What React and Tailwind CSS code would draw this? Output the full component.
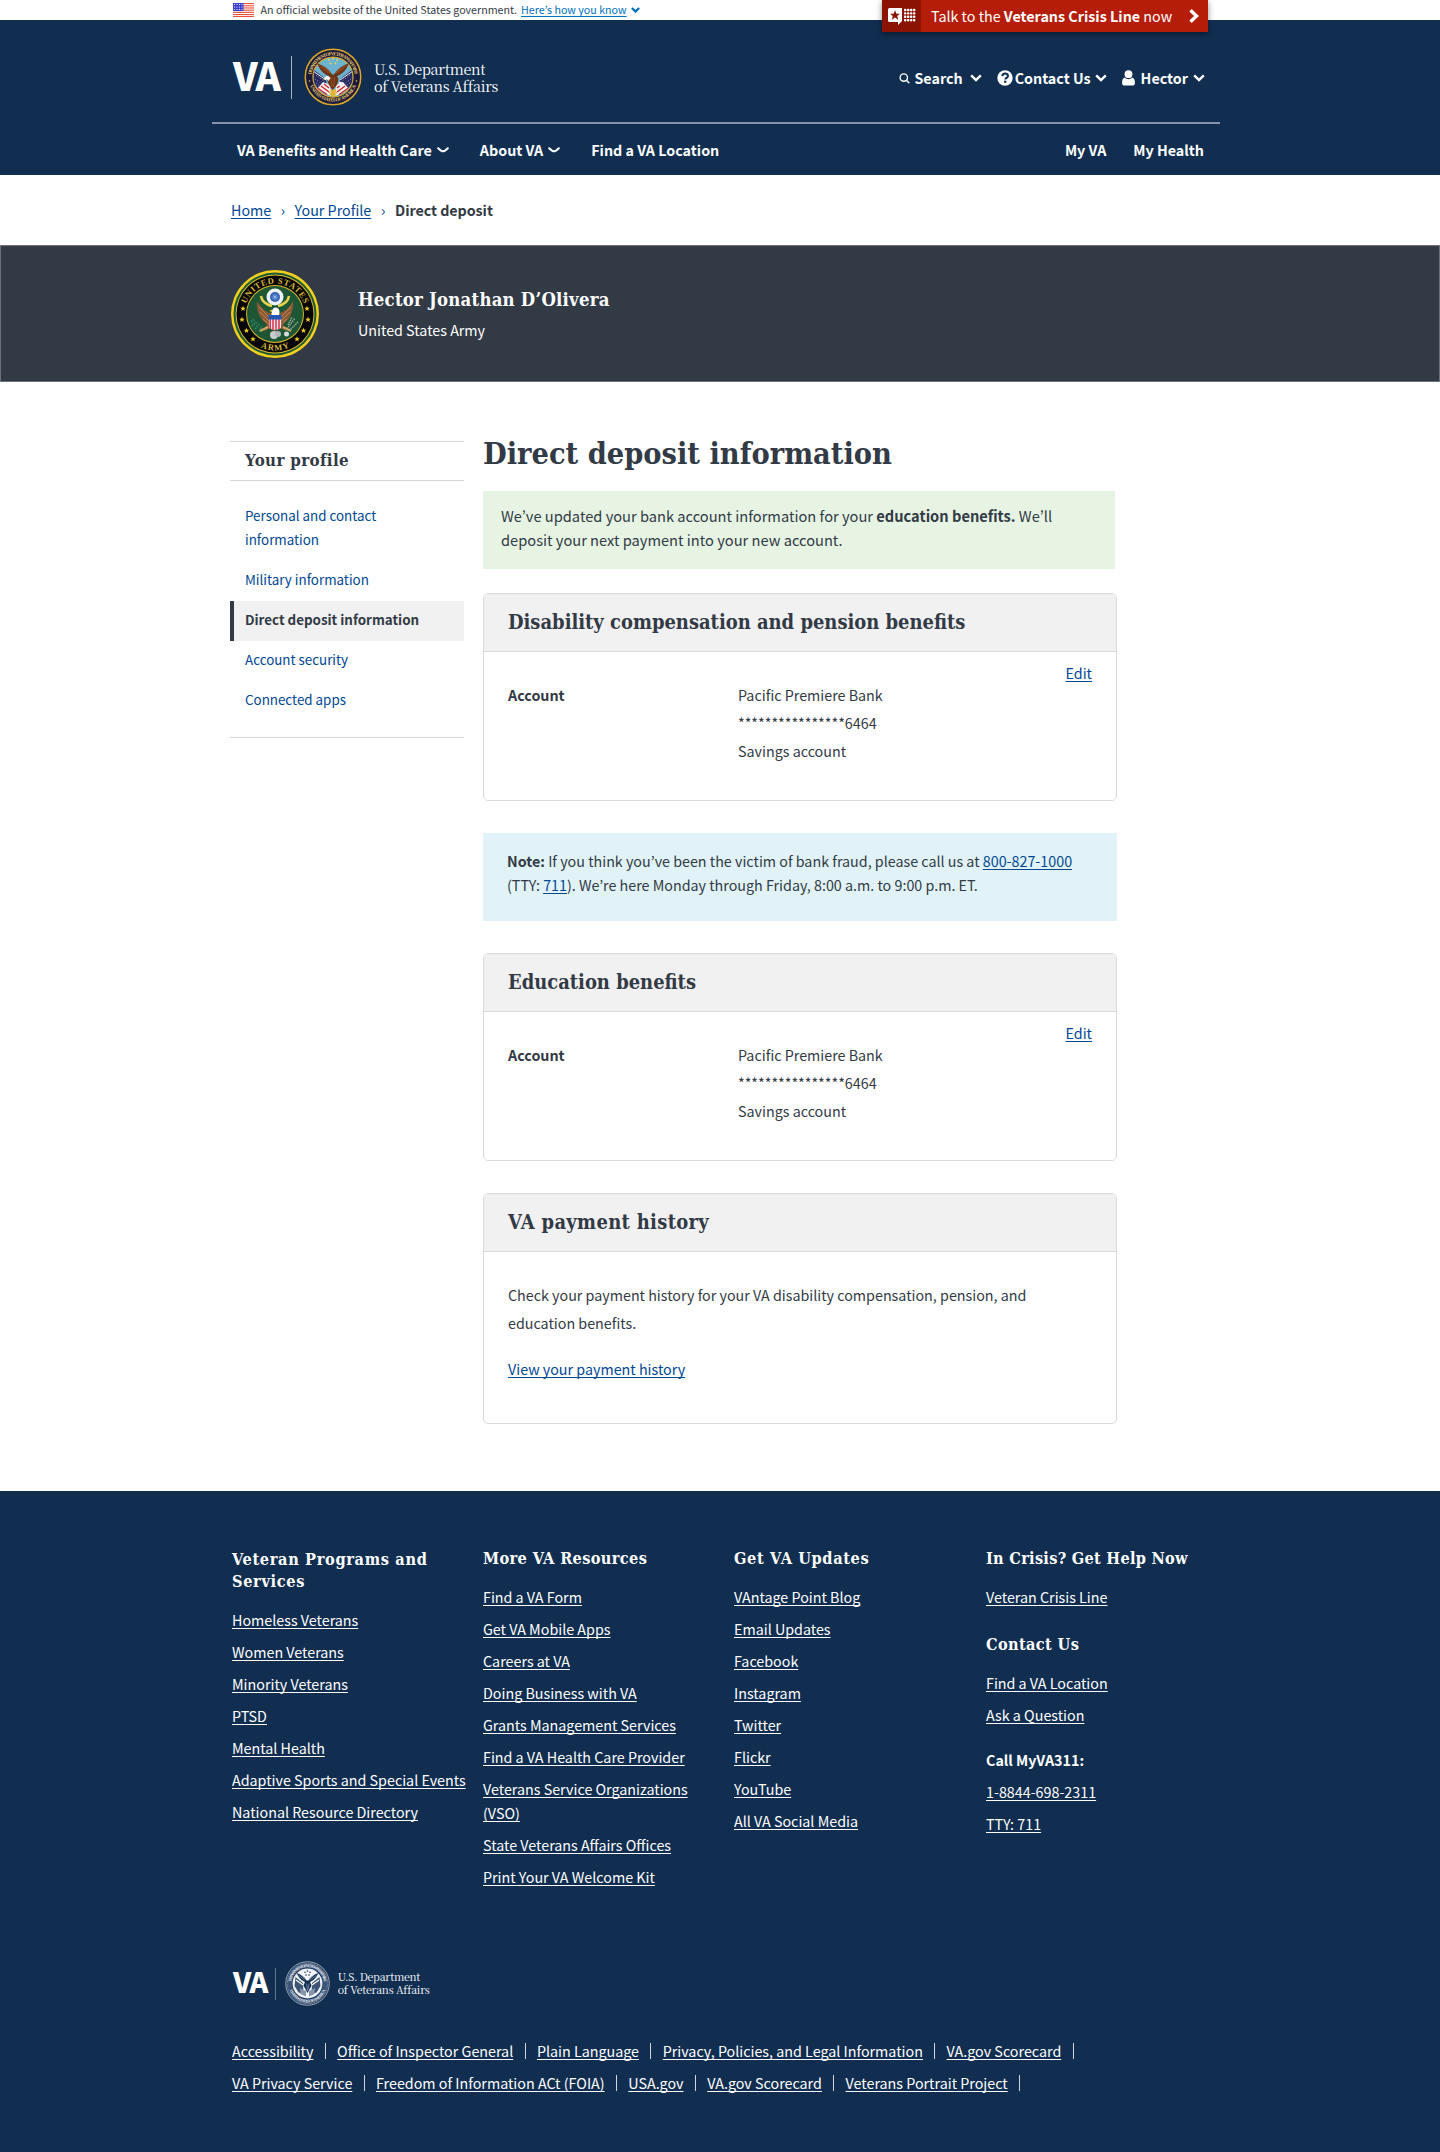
import React from "react";

const sans = "font-['Noto_Sans_CJK_KR','Noto_Sans_CJK_SC','Open_Sans',sans-serif]";
const slab = "font-['DejaVu_Serif_Condensed','DejaVu_Serif',serif] font-bold [font-stretch:condensed]";
const serif = "font-['Noto_Serif_CJK_KR','Liberation_Serif',serif]";

const linkLine = "underline decoration-1 underline-offset-2 [text-decoration-skip-ink:none]";

function Chevron({ className, weight = 2.4 }) {
  return (
    <svg viewBox="0 0 12 8" className={className} fill="none" stroke="currentColor" strokeWidth={weight}>
      <path d="M1.2 1.3 L6 6.1 L10.8 1.3" />
    </svg>
  );
}

function NavChevron() {
  return (
    <svg viewBox="0 0 12 6" className="mt-px ml-[5px] h-[6px] w-[12px]" fill="none" stroke="currentColor" strokeWidth="2" strokeLinecap="round">
      <path d="M1.200 1.200 C3 3 4.500 4.300 6 4.300 C7.500 4.300 9 3 10.800 1.200" />
    </svg>
  );
}

function Flag() {
  return (
    <svg viewBox="0 0 21 14" className="h-[14px] w-[21px] shrink-0">
      <rect width="21" height="14" fill="#fff" />
      {[0, 2.2, 4.4, 6.6, 8.8, 11, 13].map((y) => (
        <rect key={y} y={y} width="21" height="1.1" fill="#f0503c" />
      ))}
      <rect width="10.5" height="8" fill="#3c3fd0" />
      {[1.5, 4, 6.5].map((y) =>
        [1.5, 4, 6.5, 9].map((x) => <circle key={`${x}-${y}`} cx={x} cy={y} r="0.6" fill="#fff" />)
      )}
    </svg>
  );
}

function VaSeal({ className }) {
  return (
    <svg viewBox="0 0 116 116" className={className}>
      <defs>
        <path id="vaTop" d="M14.500 58 A43.500 43.500 0 0 1 101.500 58" />
        <path id="vaBottom" d="M9 58 A49 49 0 0 0 107 58" />
        <clipPath id="vaInner">
          <circle cx="58" cy="58" r="39" />
        </clipPath>
      </defs>
      <circle cx="58" cy="58" r="57.500" fill="#1b1a3c" />
      <circle cx="58" cy="58" r="55.500" fill="none" stroke="#d9a92c" strokeWidth="3" />
      <circle cx="58" cy="58" r="40" fill="#6ab4d2" stroke="#d9a92c" strokeWidth="2.500" />
      <g fontFamily="Liberation Serif" fontWeight="700" fontSize="9.500" fill="#e6c86a">
        <text textAnchor="middle">
          <textPath href="#vaTop" startOffset="50%" textLength="126">DEPARTMENT OF VETERANS AFFAIRS</textPath>
        </text>
        <text textAnchor="middle">
          <textPath href="#vaBottom" startOffset="50%" textLength="118">UNITED STATES OF AMERICA</textPath>
        </text>
      </g>
      <circle cx="11" cy="66" r="1.500" fill="#e6c86a" />
      <circle cx="105" cy="66" r="1.500" fill="#e6c86a" />
      <g clipPath="url(#vaInner)">
        <path d="M20 44 L44 62 L46 90 L30 84 L18 68Z" fill="#2a2a63" />
        <path d="M96 44 L72 62 L70 90 L86 84 L98 68Z" fill="#2a2a63" />
        <g stroke="#d8dcea" strokeWidth="1.600" strokeDasharray="1.600 4">
          <path d="M24 54 L42 68 M22 62 L42 76 M24 70 L40 82" />
          <path d="M92 54 L74 68 M94 62 L74 76 M92 70 L76 82" />
        </g>
        <path d="M38 68 L52 74 L54 96 L40 90 L26 82Z" fill="#f4f2f2" />
        <path d="M78 68 L64 74 L62 96 L76 90 L90 82Z" fill="#f4f2f2" />
        <g stroke="#c62a35" strokeWidth="3" fill="none">
          <path d="M40 72 L50 80 M34 76 L50 88 M27 80 L46 93" />
          <path d="M76 72 L66 80 M82 76 L66 88 M89 80 L70 93" />
        </g>
        <path d="M18 46 L44 64 M98 46 L72 64" stroke="#f2efe8" strokeWidth="2" />
        <path d="M54 84 L58 98 L63 84 Z M50 88 L56 97 M66 88 L60 97" fill="#e6b52d" stroke="#e6b52d" strokeWidth="2.500" />
      </g>
      <path
        d="M26 30 C31 43 38 52 50 56 L46 64 L50 74 L57 84 L66 74 L69 62 L66 56 C78 52 85 43 90 30 C83 33 76 36 70 41 C65 45 62 50 60 53 L56 53 C54 49 51 45 46 41 C40 36 33 33 26 30Z"
        fill="#6d3518"
      />
      <path
        d="M31 35 L49 50 M36 35 L52 50 M42 38 L54 51 M85 35 L67 50 M80 35 L64 50 M74 38 L62 51 M54 58 L56 78 M61 58 L59 78"
        stroke="#a2592b"
        strokeWidth="1.500"
      />
      <path d="M40 60 C44 55 50 56 53 60 L49 66 L45 62 L41 64Z" fill="#fafafa" />
      <path d="M41 63 L38 65 L41 60Z" fill="#e6b52d" />
      <path d="M70 68 q6 -2 10 4 l-4 6 -6 -3z" fill="#f2f2f6" />
      <g fill="#ecd24e">
        <circle cx="58" cy="21" r="2" />
        <circle cx="50" cy="24" r="2" />
        <circle cx="66" cy="24" r="2" />
        <circle cx="53" cy="31" r="2" />
        <circle cx="63" cy="31" r="2" />
      </g>
    </svg>
  );
}

function VaSealMono({ className }) {
  return (
    <svg viewBox="0 0 90 90" className={className}>
      <defs>
        <path id="monoTop" d="M12 45 A33 33 0 0 1 78 45" />
        <path id="monoBottom" d="M7 45 A38 38 0 0 0 83 45" />
      </defs>
      <circle cx="45" cy="45" r="43.500" fill="none" stroke="#c3cbd6" strokeWidth="1.600" />
      <circle cx="45" cy="45" r="40.500" fill="none" stroke="#8d9bb0" strokeWidth="1.400" />
      <circle cx="45" cy="45" r="35.500" fill="none" stroke="#64789a" strokeWidth="8" opacity="0.55" />
      <g fontFamily="Liberation Serif" fontWeight="700" fontSize="8" fill="#e8ecf2">
        <text textAnchor="middle">
          <textPath href="#monoTop" startOffset="50%" textLength="96">DEPARTMENT OF VETERANS AFFAIRS</textPath>
        </text>
        <text textAnchor="middle">
          <textPath href="#monoBottom" startOffset="50%" textLength="92">UNITED STATES OF AMERICA</textPath>
        </text>
      </g>
      <circle cx="45" cy="45" r="30" fill="#e9edf2" />
      <circle cx="45" cy="45" r="27" fill="#f5f7f9" />
      <path d="M21 32 L36 44 L37 66 L27 63 L19 50Z M69 32 L54 44 L53 66 L63 63 L71 50Z" fill="#3d5475" />
      <path d="M30 54 L42 60 L42 71 L31 66Z M60 54 L48 60 L48 71 L59 66Z" fill="#8494ab" />
      <path
        d="M23 24 C27 33 32 38 40 42 L37 49 L45 64 L53 49 L50 42 C58 38 63 33 67 24 C58 27 50 32 47 39 L43 39 C40 32 32 27 23 24Z"
        fill="#112e51"
      />
      <path d="M27 28 L39 38 M32 28 L41 37 M63 28 L51 38 M58 28 L49 37 M43 45 L45 60 M48 45 L46 58" stroke="#a3b0c2" strokeWidth="1.200" />
      <path d="M22 38 L36 48 M68 38 L54 48" stroke="#fff" strokeWidth="2.400" />
      <g fill="#112e51">
        <circle cx="45" cy="20" r="1.500" />
        <circle cx="40" cy="22.500" r="1.500" />
        <circle cx="50" cy="22.500" r="1.500" />
        <circle cx="42" cy="28" r="1.500" />
        <circle cx="48" cy="28" r="1.500" />
      </g>
    </svg>
  );
}

const STAR = "M0 -5 L1.400 -1.500 L5 -1.500 L2.200 0.800 L3.200 4.500 L0 2.300 L-3.200 4.500 L-2.200 0.800 L-5 -1.500 L-1.400 -1.500Z";

function ArmySeal() {
  const stars = [
    [22, 99], [24, 77], [31, 121], [44, 138],
    [154, 99], [152, 77], [145, 121], [132, 138],
  ];
  return (
    <svg viewBox="0 0 176 176" className="size-[88px] shrink-0">
      <defs>
        <path id="armyTop" d="M27 88 A61 61 0 0 1 149 88" />
        <path id="armyBottom" d="M15 88 A73 73 0 0 0 161 88" />
      </defs>
      <circle cx="88" cy="88" r="88" fill="#f2cf1d" />
      <circle cx="88" cy="88" r="83" fill="#1d5a37" />
      <circle cx="88" cy="88" r="79" fill="#d8b92a" />
      <circle cx="88" cy="88" r="77" fill="#050505" />
      <circle cx="88" cy="88" r="58" fill="#d8b92a" />
      <circle cx="88" cy="88" r="56" fill="#1c5635" />
      <g fontFamily="Liberation Serif" fontWeight="700" fontSize="17" fill="#d9b83a">
        <text textAnchor="middle">
          <textPath href="#armyTop" startOffset="50%" textLength="150">UNITED STATES</textPath>
        </text>
        <text textAnchor="middle">
          <textPath href="#armyBottom" startOffset="50%" textLength="60">ARMY</textPath>
        </text>
      </g>
      {stars.map(([x, y]) => (
        <path key={`${x}-${y}`} d={STAR} transform={`translate(${x} ${y}) scale(1.1)`} fill="#f2cf1d" />
      ))}
      <path
        d="M52 62 C50 82 58 100 72 108 L66 122 L78 116 L88 122 L98 116 L110 122 L104 108 C118 100 126 82 124 62 C116 76 108 82 98 86 L78 86 C68 82 60 76 52 62Z"
        fill="#8a5a34"
      />
      <path
        d="M56 74 L76 94 M58 84 L76 102 M64 98 L76 108 M120 74 L100 94 M118 84 L100 102 M112 98 L100 108"
        stroke="#b98554"
        strokeWidth="2"
      />
      <path d="M60 52 C62 66 74 70 82 72 M116 52 C114 66 102 70 94 72" fill="none" stroke="#e7d34a" strokeWidth="5" />
      <circle cx="88" cy="54" r="17" fill="#eef1f5" />
      <circle cx="88" cy="54" r="10" fill="#2f62b5" />
      <path d="M81 54 H95 M88 47 V61 M83 49 L93 59 M93 49 L83 59" stroke="#b8cbec" strokeWidth="1.200" />
      <path d="M81 90 C81 80 84 75 90 75 C97 76 98 83 96 90Z" fill="#fff" />
      <path d="M82 79 L76 82 L82 84Z" fill="#e7c52a" />
      <path d="M76 90 H100 V116 Q88 124 76 116Z" fill="#f6e4e6" />
      <path d="M78.500 98 V118 M84 98 V120 M90 98 V120 M96 98 V118" stroke="#cf3350" strokeWidth="3" />
      <rect x="75" y="90" width="26" height="9" fill="#2457b4" />
      <path d="M40 104 l8 -6 M42 112 l9 -8 M48 118 l8 -10 M56 122 l6 -10" stroke="#2f8a6c" strokeWidth="4" strokeDasharray="3 2" />
      <path d="M58 122 L74 114 M104 114 L120 122" stroke="#d3a95b" strokeWidth="4" />
      <path d="M112 118 L128 96 M116 122 L134 104 M114 110 L122 94" stroke="#98a89f" strokeWidth="3" strokeDasharray="3 1.500" />
      <circle cx="86" cy="130" r="8" fill="#c9ccce" />
      <circle cx="94" cy="128" r="6" fill="#b3b8ba" />
      <circle cx="111" cy="128" r="5" fill="#d7dadb" />
    </svg>
  );
}

function Card({ title, className, titleClass = "", children }) {
  return (
    <section className={`w-[634px] overflow-hidden rounded-[5px] border border-[#d9dadc] bg-white ${className}`}>
      <header className="h-[58px] border-b border-[#d9dadc] bg-[#f1f1f1] pt-4 pl-6">
        <h2 className={`${slab} text-[19.940px] leading-6 ${titleClass}`}>{title}</h2>
      </header>
      {children}
    </section>
  );
}

function AccountBody() {
  return (
    <div className="px-6 pt-[9px]">
      <div className="flex justify-end">
        <a className={`${linkLine} text-[#004795]`}>Edit</a>
      </div>
      <dl className="-mt-1 flex leading-7">
        <dt className="w-[230px] font-bold">Account</dt>
        <dd>
          <p>Pacific Premiere Bank</p>
          <p>****************6464</p>
          <p>Savings account</p>
        </dd>
      </dl>
    </div>
  );
}

function FooterHeading({ className, children }) {
  return <h3 className={`${slab} pt-px text-[16.200px] leading-[22px] ${className}`}>{children}</h3>;
}

function FooterLinks({ items, className = "mt-[15px]" }) {
  return (
    <ul className={`flex flex-col gap-2 ${className}`}>
      {items.map((t) => (
        <li key={t}>
          <a className={linkLine}>{t}</a>
        </li>
      ))}
    </ul>
  );
}

function LegalRow({ items }) {
  return (
    <div className="flex items-center">
      {items.map((t) => (
        <React.Fragment key={t}>
          <a className={linkLine}>{t}</a>
          <span className="mx-[11.350px] h-4 w-px bg-white/80" />
        </React.Fragment>
      ))}
    </div>
  );
}

export default function App() {
  return (
    <div className={`${sans} min-h-[2152px] bg-white text-[14.300px] leading-6 text-[#323a45]`}>
      <div className="flex h-5 items-center bg-white pl-[233px] text-[10.700px] leading-5">
        <Flag />
        <span className="ml-[6.500px]">An official website of the United States government.</span>
        <a className={`${linkLine} ml-[4px] text-[#0071bc]`}>Here’s how you know</a>
        <Chevron className="ml-1 h-[6px] w-[9px] text-[#0071bc]" weight={3} />
      </div>

      <header className="relative h-[155px] bg-[#112e51] text-white">
        <div className="absolute -top-5 left-[882px] flex h-8 w-[326px] items-center bg-[#b51d09] shadow-[0_2px_6px_rgba(0,0,0,0.45)]">
          <div className="flex h-8 w-[39px] items-center justify-center bg-[#8b1303]">
            <svg viewBox="0 0 28 17" className="h-[17px] w-[28px]">
              <path d="M1.500 0 H14 V13.500 H13.500 L10 17 V14 H1.500 A1.500 1.500 0 0 1 0 12.500 V1.500 A1.500 1.500 0 0 1 1.500 0Z" fill="#fff" />
              <path d={STAR} transform="translate(7 7.200)" fill="#8b1303" />
              {[16, 19, 22, 25].map((x) =>
                [0.8, 4.2, 7.6, 11].map((y) => <rect key={`${x}-${y}`} x={x} y={y} width="2.400" height="2.400" rx="0.800" fill="#fff" />)
              )}
            </svg>
          </div>
          <p className="-mt-px ml-[10px] whitespace-nowrap">
            Talk to the <b>Veterans Crisis Line</b> now
          </p>
          <svg viewBox="0 0 10 14" className="mr-[9px] ml-auto h-[14px] w-[10px]" fill="none" stroke="#fff" strokeWidth="3.400">
            <path d="M1.500 1.200 L7.500 7 L1.500 12.800" />
          </svg>
        </div>

        <div className="ml-[212px] flex h-[104px] w-[1008px] border-b-2 border-[#8594a8] pt-7">
          <div className="ml-[21px] flex h-[58px] items-center">
            <span className="mb-[6px] text-[38.600px] leading-[52px] font-black tracking-[-1.500px]">VA</span>
            <span className="ml-[12px] h-[43px] w-px bg-[#a9b4c2]" />
            <VaSeal className="ml-[12px] size-[58px]" />
            <p className={`${serif} ml-[11.500px] text-[14.400px] leading-[17px] tracking-[-0.320px]`}>
              U.S. Department
              <br />
              of Veterans Affairs
            </p>
          </div>
          <div className="mt-px mr-[15px] ml-auto flex h-[58px] items-center font-bold">
            <svg viewBox="0 0 11 11" className="mr-[4px] h-[11px] w-[11px]" fill="none" stroke="#fff" strokeWidth="1.400">
              <circle cx="4.800" cy="4.600" r="3.700" />
              <path d="M7.400 7.300 L10.300 10.300" />
            </svg>
            <span>Search</span>
            <Chevron className="ml-[7px] h-[8px] w-[12px]" />
            <svg viewBox="0 0 16 16" className="mr-[2px] ml-[15px] size-4">
              <circle cx="8" cy="8" r="7.700" fill="#fff" />
              <path d="M5.300 6.100 C5.400 4.200 6.600 3.400 8.100 3.400 C9.800 3.400 11 4.400 11 5.900 C11 7.800 8.500 7.900 8.300 9.500" fill="none" stroke="#112e51" strokeWidth="2" />
              <rect x="7.100" y="10.700" width="2.300" height="2.100" fill="#112e51" />
            </svg>
            <span>Contact Us</span>
            <Chevron className="ml-[4px] h-[8px] w-[12px]" />
            <svg viewBox="0 0 13 16" className="mr-[6px] ml-[15px] h-[16px] w-[13px]" fill="#fff">
              <circle cx="6.500" cy="4.200" r="3.900" />
              <path d="M2.800 7.600 C3.800 8.600 5 9.200 6.500 9.200 C8 9.200 9.200 8.600 10.200 7.600 C12.200 8.100 12.900 10 12.900 13 C12.900 14.600 12 15.600 10.500 15.600 H2.500 C1 15.600 0.100 14.600 0.100 13 C0.100 10 0.800 8.100 2.800 7.600Z" />
            </svg>
            <span>Hector</span>
            <Chevron className="ml-[5px] h-[8px] w-[12px]" />
          </div>
        </div>

        <nav className="ml-[212px] flex h-[51px] w-[1008px] items-center pr-[16px] pl-[25px] font-bold">
          <span>VA Benefits and Health Care</span>
          <NavChevron />
          <span className="ml-[31px]">About VA</span>
          <NavChevron />
          <span className="ml-[31px]">Find a VA Location</span>
          <span className="ml-auto">My VA</span>
          <span className="ml-[27px]">My Health</span>
        </nav>
      </header>

      <nav className="flex h-[70px] items-center pl-[231px]">
        <a className={`${linkLine} text-[#004795]`}>Home</a>
        <span className="mx-[9.500px] text-[#004795]">›</span>
        <a className={`${linkLine} text-[#004795]`}>Your Profile</a>
        <span className="mx-[9.700px] text-[#004795]">›</span>
        <span className="font-bold tracking-[-0.050px]">Direct deposit</span>
      </nav>

      <section className="flex h-[137px] items-start border border-[#6d7076] bg-[#323a45] pt-6 pl-[230px] text-white">
        <ArmySeal />
        <div className="mt-4 ml-[39px]">
          <h2 className={`${slab} text-[18.400px] leading-7 tracking-[0.230px]`}>Hector Jonathan D’Olivera</h2>
          <p className="mt-1">United States Army</p>
        </div>
      </section>

      <main className="flex pt-[53px] pl-[230px]">
        <aside className="mt-[6px] mr-[19px] h-[297px] w-[234px] border-y border-[#d6d7d9]">
          <h2 className={`${slab} h-[39px] border-b border-[#d6d7d9] pl-[15px] text-[16.800px] leading-[37px] tracking-[0.350px]`}>
            Your profile
          </h2>
          <ul className="mt-4 text-[13.380px] text-[#004795]">
            <li className="w-[190px] pt-[6px] pb-[10px] pl-[15px]">Personal and contact information</li>
            <li className="pt-[6px] pb-[10px] pl-[15px]">Military information</li>
            <li className="border-l-4 border-[#323a45] bg-[#f1f1f1] pt-[6px] pb-[10px] pl-[11px] font-bold text-[#323a45]">Direct deposit information</li>
            <li className="pt-[6px] pb-[10px] pl-[15px]">Account security</li>
            <li className="pt-[6px] pb-[10px] pl-[15px]">Connected apps</li>
          </ul>
        </aside>

        <div>
          <h1 className={`${slab} text-[30.400px] leading-9`}>Direct deposit information</h1>
          <p className="mt-5 h-[78px] w-[632px] bg-[#e7f4e4] pt-[13px] pr-10 pl-[18px] text-[14.650px]">
            We’ve updated your bank account information for your <b>education benefits.</b> We’ll deposit your next payment into your new account.
          </p>

          <Card title="Disability compensation and pension benefits" className="mt-6 h-[208px]">
            <AccountBody />
          </Card>

          <p className="mt-8 h-[88px] w-[634px] bg-[#e1f3f8] pt-4 pr-8 pl-6">
            <b>Note:</b> If you think you’ve been the victim of bank fraud, please call us at{" "}
            <a className={`${linkLine} text-[#004795]`}>800-827-1000</a> (TTY:{" "}
            <a className={`${linkLine} text-[#004795]`}>711</a>). We’re here Monday through Friday, 8:00 a.m. to 9:00 p.m. ET.
          </p>

          <Card title="Education benefits" className="mt-8 h-[208px]">
            <AccountBody />
          </Card>

          <Card title="VA payment history" titleClass="tracking-[0.330px]" className="mt-8 h-[231px]">
            <div className="px-6 pt-[29px] leading-7">
              <p className="pr-10">Check your payment history for your VA disability compensation, pension, and education benefits.</p>
              <p className="mt-[18px]">
                <a className={`${linkLine} text-[#004795]`}>View your payment history</a>
              </p>
            </div>
          </Card>
        </div>
      </main>

      <footer className="mt-[67px] h-[661px] bg-[#112e51] pt-14 pl-[232px] text-white">
        <div className="grid h-[342px] grid-cols-[251px_251px_252px_240px]">
          <div className="mt-px">
            <FooterHeading className="w-[210px] tracking-[0.660px]">Veteran Programs and Services</FooterHeading>
            <FooterLinks
              items={["Homeless Veterans", "Women Veterans", "Minority Veterans", "PTSD", "Mental Health", "Adaptive Sports and Special Events", "National Resource Directory"]}
            />
          </div>
          <div className="w-[220px]">
            <FooterHeading className="tracking-[0.360px]">More VA Resources</FooterHeading>
            <FooterLinks
              items={["Find a VA Form", "Get VA Mobile Apps", "Careers at VA", "Doing Business with VA", "Grants Management Services", "Find a VA Health Care Provider", "Veterans Service Organizations (VSO)", "State Veterans Affairs Offices", "Print Your VA Welcome Kit"]}
            />
          </div>
          <div>
            <FooterHeading className="tracking-[0.620px]">Get VA Updates</FooterHeading>
            <FooterLinks items={["VAntage Point Blog", "Email Updates", "Facebook", "Instagram", "Twitter", "Flickr", "YouTube", "All VA Social Media"]} />
          </div>
          <div>
            <FooterHeading className="tracking-[0.270px]">In Crisis? Get Help Now</FooterHeading>
            <FooterLinks items={["Veteran Crisis Line"]} />
            <FooterHeading className="mt-6 tracking-[0.360px]">Contact Us</FooterHeading>
            <FooterLinks items={["Find a VA Location", "Ask a Question"]} />
            <p className="mt-[21px] font-bold">Call MyVA311:</p>
            <FooterLinks className="mt-2" items={["1-8844-698-2311", "TTY: 711"]} />
          </div>
        </div>

        <div className="mt-[72px] flex h-[45px] items-center">
          <span className="mb-[6px] ml-px text-[28.600px] leading-[39px] font-black tracking-[-1.200px]">VA</span>
          <span className="ml-[8px] h-[32px] w-px bg-[#64789a]" />
          <VaSealMono className="ml-[8.500px] size-[45px]" />
          <p className={`${serif} ml-2 text-[10.650px] leading-[12.600px] tracking-[-0.230px]`}>
            U.S. Department
            <br />
            of Veterans Affairs
          </p>
        </div>

        <div className="mt-[33px] flex flex-col gap-2">
          <LegalRow items={["Accessibility", "Office of Inspector General", "Plain Language", "Privacy, Policies, and Legal Information", "VA.gov Scorecard"]} />
          <LegalRow items={["VA Privacy Service", "Freedom of Information ACt (FOIA)", "USA.gov", "VA.gov Scorecard", "Veterans Portrait Project"]} />
        </div>
      </footer>
    </div>
  );
}
